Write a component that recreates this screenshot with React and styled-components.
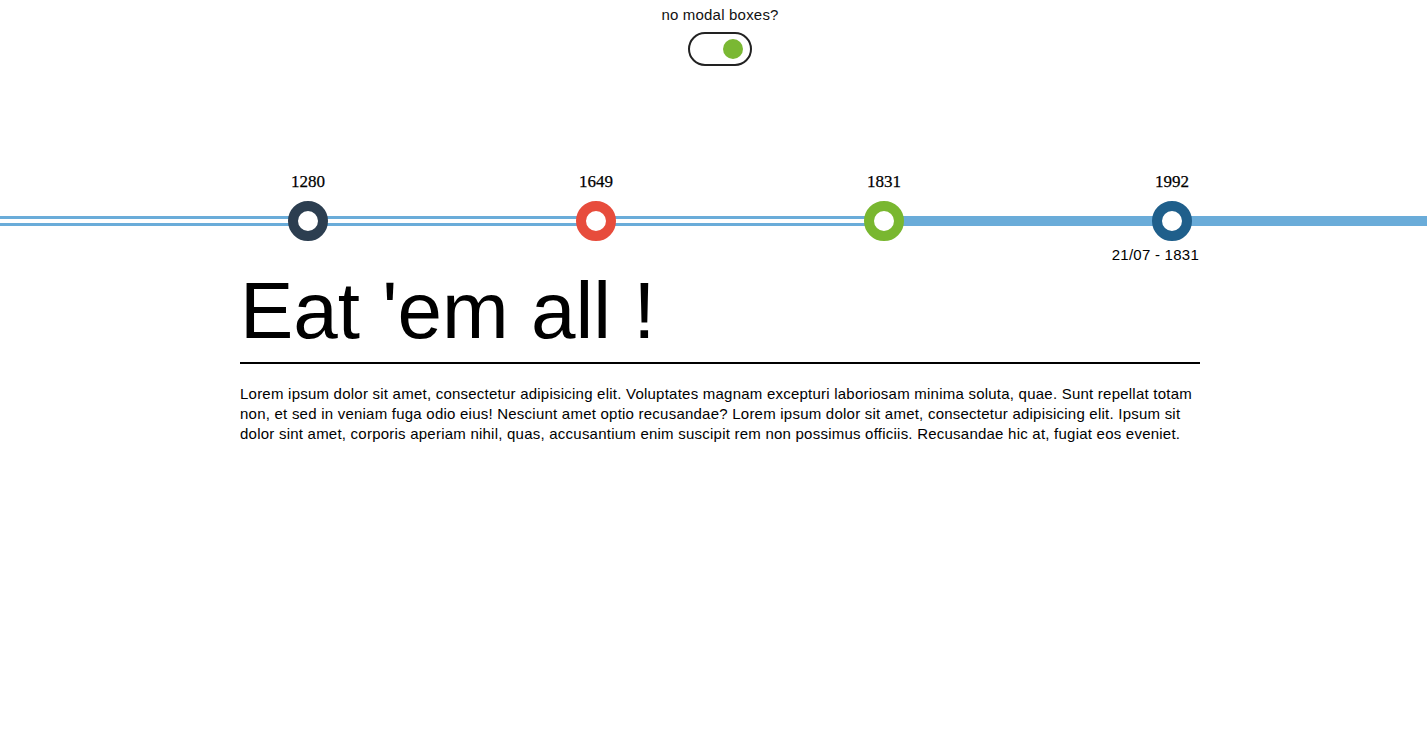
import React, { useState } from "react";
import styled, { createGlobalStyle } from "styled-components";

const GlobalStyle = createGlobalStyle`
  html, body {
    margin: 0;
    padding: 0;
    background: #fff;
    overflow-x: hidden;
  }
  body {
    font-family: "Liberation Sans", Arial, sans-serif;
    color: #000;
  }
`;

const Page = styled.div`
  width: 1440px;
`;

const SwitchArea = styled.div`
  display: flex;
  flex-direction: column;
  align-items: center;
  padding-top: 6px;
`;

const SwitchLabel = styled.div`
  font-size: 15px;
  line-height: 18px;
  letter-spacing: 0.2px;
  color: #111;
`;

const Toggle = styled.button`
  margin-top: 8px;
  width: 64px;
  height: 34px;
  box-sizing: border-box;
  border: 2px solid #222;
  border-radius: 17px;
  background: #fff;
  padding: 0 7px;
  display: flex;
  align-items: center;
  justify-content: ${(p) => (p.$on ? "flex-end" : "flex-start")};
  cursor: pointer;
`;

const Knob = styled.span`
  width: 20px;
  height: 20px;
  border-radius: 50%;
  background: ${(p) => (p.$on ? "#7ab833" : "#ccc")};
`;

const Timeline = styled.div`
  position: relative;
  margin-top: 106px;
`;

const Track = styled.div`
  position: absolute;
  left: 0;
  right: 0;
  top: 44px;
  height: 10px;
  display: flex;
`;

const Passed = styled.div`
  width: 884px;
  box-sizing: border-box;
  border-top: 3px solid #6aacd9;
  border-bottom: 3px solid #6aacd9;
`;

const Rest = styled.div`
  flex: 1;
  background: #6aacd9;
`;

const Events = styled.div`
  position: relative;
  display: flex;
  padding-left: 288px;
`;

const Event = styled.div`
  width: 288px;
  display: flex;
  flex-direction: column;
  align-items: flex-start;
`;

const Year = styled.div`
  width: 40px;
  padding-top: 1px;
  display: flex;
  justify-content: center;
  font-family: "Liberation Serif", "Times New Roman", serif;
  font-size: 17px;
  line-height: 18px;
  white-space: nowrap;
  -webkit-text-stroke: 0.25px #000;
`;

const Dot = styled.div`
  margin-top: 10px;
  width: 40px;
  height: 40px;
  box-sizing: border-box;
  border-radius: 50%;
  border: 10px solid ${(p) => p.$color};
  background: #fff;
`;

const Content = styled.div`
  width: 960px;
  margin-left: 240px;
`;

const DateLine = styled.div`
  margin-top: 4px;
  text-align: right;
  font-size: 15px;
  line-height: 18px;
  letter-spacing: 0.25px;
  padding-right: 1px;
  padding-top: 1px;
`;

const Title = styled.h1`
  margin: 7px 0 0;
  font-size: 80px;
  line-height: 80px;
  font-weight: normal;
  padding-bottom: 11px;
  border-bottom: 2px solid #000;
`;

const Text = styled.p`
  margin: 20px 0 0;
  font-size: 15px;
  line-height: 20px;
  letter-spacing: 0.23px;
`;

const events = [
  { year: "1280", color: "#2c3e50" },
  { year: "1649", color: "#e74c3c" },
  { year: "1831", color: "#79b730" },
  { year: "1992", color: "#1f5f8b" },
];

export default function App() {
  const [noModal, setNoModal] = useState(true);

  return (
    <Page>
      <GlobalStyle />
      <SwitchArea>
        <SwitchLabel>no modal boxes?</SwitchLabel>
        <Toggle $on={noModal} onClick={() => setNoModal(!noModal)}>
          <Knob $on={noModal} />
        </Toggle>
      </SwitchArea>

      <Timeline>
        <Track>
          <Passed />
          <Rest />
        </Track>
        <Events>
          {events.map((e) => (
            <Event key={e.year}>
              <Year>{e.year}</Year>
              <Dot $color={e.color} />
            </Event>
          ))}
        </Events>
      </Timeline>

      <Content>
        <DateLine>21/07 - 1831</DateLine>
        <Title>Eat 'em all !</Title>
        <Text>
          Lorem ipsum dolor sit amet, consectetur adipisicing elit. Voluptates magnam excepturi
          laboriosam minima soluta, quae. Sunt repellat totam non, et sed in veniam fuga odio eius!
          Nesciunt amet optio recusandae? Lorem ipsum dolor sit amet, consectetur adipisicing elit.
          Ipsum sit dolor sint amet, corporis aperiam nihil, quas, accusantium enim suscipit rem non
          possimus officiis. Recusandae hic at, fugiat eos eveniet.
        </Text>
      </Content>
    </Page>
  );
}
